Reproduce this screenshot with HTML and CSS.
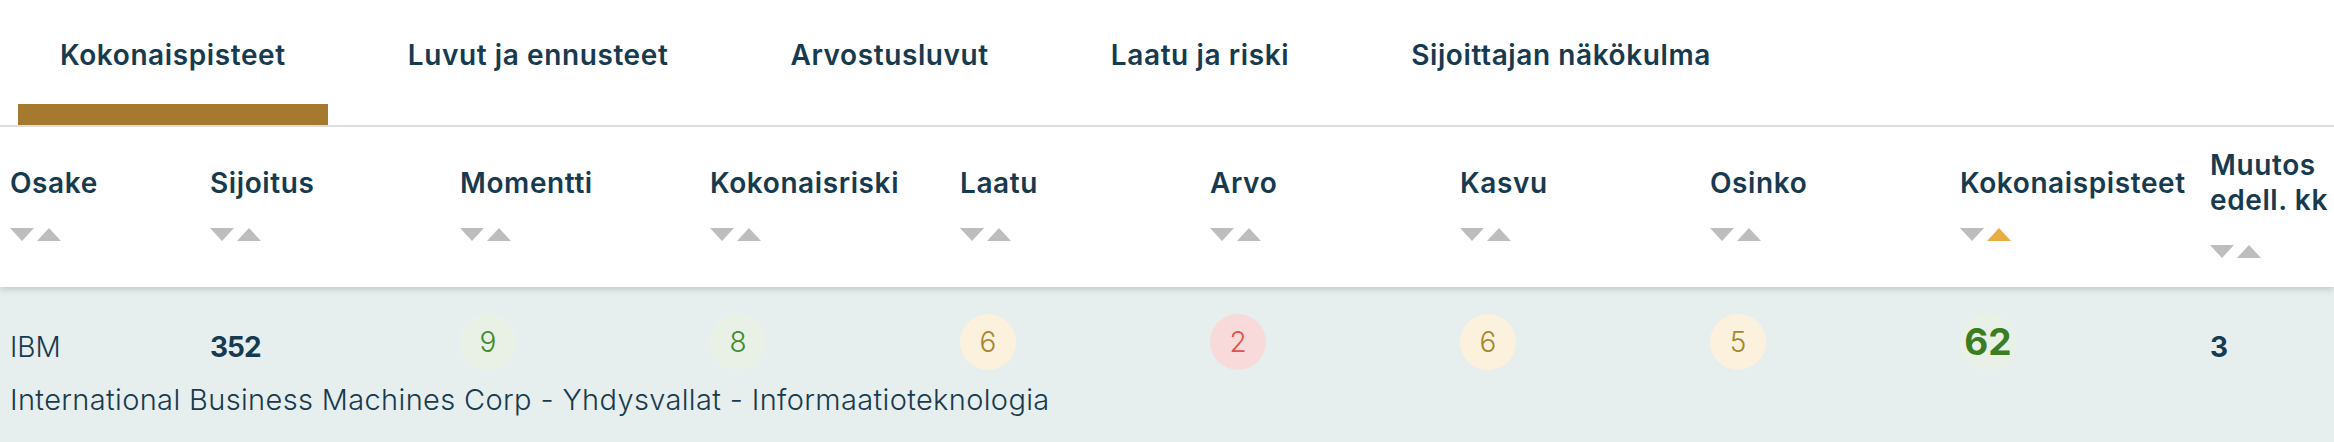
FILE: index.html
```html
<!DOCTYPE html>
<html lang="fi">
  <head>
    <meta charset="UTF-8" />
    <meta name="viewport" content="width=device-width, initial-scale=1.0" />
    <title>Osakkeet - Kokonaispisteet</title>
    <link rel="stylesheet" href="styles.css">
  </head>
  <body>
    <nav class="tabs">
      <a class="tab active">Kokonaispisteet</a>
      <a class="tab">Luvut ja ennusteet</a>
      <a class="tab">Arvostusluvut</a>
      <a class="tab">Laatu ja riski</a>
      <a class="tab">Sijoittajan näkökulma</a>
    </nav>

    <div class="score-table">
      <div class="head">
        <div class="th"><div class="th-label">Osake</div><div class="sort"><span class="down"></span><span class="up"></span></div></div>
        <div class="th"><div class="th-label">Sijoitus</div><div class="sort"><span class="down"></span><span class="up"></span></div></div>
        <div class="th"><div class="th-label">Momentti</div><div class="sort"><span class="down"></span><span class="up"></span></div></div>
        <div class="th"><div class="th-label">Kokonaisriski</div><div class="sort"><span class="down"></span><span class="up"></span></div></div>
        <div class="th"><div class="th-label">Laatu</div><div class="sort"><span class="down"></span><span class="up"></span></div></div>
        <div class="th"><div class="th-label">Arvo</div><div class="sort"><span class="down"></span><span class="up"></span></div></div>
        <div class="th"><div class="th-label">Kasvu</div><div class="sort"><span class="down"></span><span class="up"></span></div></div>
        <div class="th"><div class="th-label">Osinko</div><div class="sort"><span class="down"></span><span class="up"></span></div></div>
        <div class="th"><div class="th-label">Kokonaispisteet</div><div class="sort"><span class="down"></span><span class="up active"></span></div></div>
        <div class="th"><div class="th-label">Muutos edell. kk</div><div class="sort"><span class="down"></span><span class="up"></span></div></div>
      </div>

      <div class="row">
        <div class="td text">IBM</div>
        <div class="td text strong">352</div>
        <div class="td"><span class="badge good">9</span></div>
        <div class="td"><span class="badge good">8</span></div>
        <div class="td"><span class="badge mid">6</span></div>
        <div class="td"><span class="badge bad">2</span></div>
        <div class="td"><span class="badge mid">6</span></div>
        <div class="td"><span class="badge mid">5</span></div>
        <div class="td"><span class="badge good total">62</span></div>
        <div class="td text strong">3</div>
        <div class="company">International Business Machines Corp - Yhdysvallat - Informaatioteknologia</div>
      </div>
    </div>
  </body>
</html>
```

FILE: styles.css
```css
:root {
  --navy: #183a4f;
  --sort: #bdbdbd;
  --row-bg: #e6efee;
}

body {
  margin: 0;
  font-family: Inter, "Open Sans", sans-serif;
  color: var(--navy);
  background: white;
  overflow: hidden;
}

/* tabs */

.tabs {
  display: flex;
  gap: 38px;
  padding-left: 18px;
  border-bottom: 2px solid #e1e1e1;
}

.tab {
  padding: 38px 42px 32px;
  font-size: 28px;
  font-weight: 600;
  line-height: 34px;
  letter-spacing: 0.6px;
  border-bottom: 21px solid transparent;
  cursor: pointer;
}

.tab.active {
  border-bottom-color: #a57a2e;
}

/* table */

.head,
.row {
  display: grid;
  grid-template-columns: 200px repeat(8, 250px) 1fr;
}

.head {
  position: relative;
  z-index: 1;
  height: 160px;
  background: white;
  box-shadow: 0 3px 6px rgba(0, 0, 0, 0.14);
}

.th {
  display: flex;
  flex-direction: column;
  justify-content: center;
  padding: 0 0 8px 10px;
  font-size: 28px;
  font-weight: 600;
  letter-spacing: 0.6px;
}

.th-label {
  line-height: 35px;
}

.sort {
  display: flex;
  gap: 3px;
  margin-top: 27px;
  height: 13px;
}

.sort span {
  width: 0;
  height: 0;
  border-left: 12px solid transparent;
  border-right: 12px solid transparent;
}

.sort .down {
  border-top: 13px solid var(--sort);
}

.sort .up {
  border-bottom: 13px solid var(--sort);
}

.sort .up.active {
  border-bottom-color: #e8ae44;
}

.row {
  background: var(--row-bg);
  padding: 27px 0 30px;
}

.td {
  padding-left: 10px;
  height: 56px;
  font-size: 28px;
  font-weight: 300;
}

.td.text {
  line-height: 66px;
}

.td.strong {
  font-weight: 700;
  letter-spacing: -1px;
}

.badge {
  display: block;
  width: 56px;
  height: 56px;
  border-radius: 50%;
  text-align: center;
  line-height: 56px;
}

.badge.good {
  background: #e9f1e7;
  color: #3f8a2c;
}

.badge.mid {
  background: #fcf1dc;
  color: #a5872f;
}

.badge.bad {
  background: #f9dadb;
  color: #e5504c;
}

.badge.total {
  font-size: 37px;
  font-weight: 700;
  color: #3a7d22;
}

.company {
  grid-column: 1 / -1;
  padding-left: 10px;
  margin-top: 10px;
  font-size: 29px;
  font-weight: 300;
  line-height: 40px;
  letter-spacing: 0.35px;
}
```
